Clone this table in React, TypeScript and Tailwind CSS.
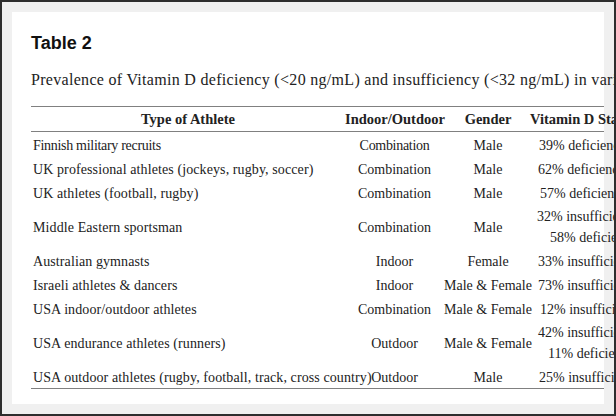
import React from 'react';

interface Row {
  athlete: string;
  setting: string;
  gender: string;
  status: { text: string; indent: string }[];
  tall?: boolean;
  tight?: boolean;
}

const rows: Row[] = [
  { athlete: 'Finnish military recruits', setting: 'Combination', gender: 'Male', tight: true, status: [{ text: '39% deficiency', indent: 'pl-[7px]' }] },
  { athlete: 'UK professional athletes (jockeys, rugby, soccer)', setting: 'Combination', gender: 'Male', status: [{ text: '62% deficiency', indent: 'pl-[6px]' }] },
  { athlete: 'UK athletes (football, rugby)', setting: 'Combination', gender: 'Male', status: [{ text: '57% deficiency', indent: 'pl-[8px]' }] },
  {
    athlete: 'Middle Eastern sportsman',
    setting: 'Combination',
    gender: 'Male',
    tall: true,
    status: [
      { text: '32% insufficiency', indent: 'pl-[5px]' },
      { text: '58% deficiency', indent: 'pl-[18px]' },
    ],
  },
  { athlete: 'Australian gymnasts', setting: 'Indoor', gender: 'Female', status: [{ text: '33% insufficiency', indent: 'pl-[6px]' }] },
  { athlete: 'Israeli athletes & dancers', setting: 'Indoor', gender: 'Male & Female', status: [{ text: '73% insufficiency', indent: 'pl-[6px]' }] },
  { athlete: 'USA indoor/outdoor athletes', setting: 'Combination', gender: 'Male & Female', status: [{ text: '12% insufficiency', indent: 'pl-[8px]' }] },
  {
    athlete: 'USA endurance athletes (runners)',
    setting: 'Outdoor',
    gender: 'Male & Female',
    tall: true,
    status: [
      { text: '42% insufficiency', indent: 'pl-[6px]' },
      { text: '11% deficiency', indent: 'pl-[16px]' },
    ],
  },
  { athlete: 'USA outdoor athletes (rugby, football, track, cross country)', setting: 'Outdoor', gender: 'Male', status: [{ text: '25% insufficiency', indent: 'pl-[7px]' }] },
];

const serif = "font-['Liberation_Serif',serif]";

export default function App() {
  return (
    <div className="w-[616px] h-[416px] border-2 border-[#2e2e2e] bg-[#f0f0f0] p-[10px] overflow-hidden">
      <div className="bg-white h-full pl-[19px] pt-[20px]">
        <h1 className="font-['Liberation_Sans',Arial,sans-serif] font-bold text-[18px] leading-[22px] text-[#111]">Table 2</h1>
        <p className={`${serif} mt-[16px] text-[16px] tracking-[0.3px] leading-[20px] text-[#222] whitespace-nowrap`}>
          Prevalence of Vitamin D deficiency (&lt;20 ng/mL) and insufficiency (&lt;32 ng/mL) in various athletic populations
        </p>

        <div className={`${serif} mt-[16px] border-t border-b border-[#808080] text-[#222]`}>
          <div className="grid grid-cols-[314px_99px_88px_73px] h-[25px] pt-[2px] items-center border-b border-[#808080] font-bold text-[14.5px] whitespace-nowrap">
            <div className="text-center">Type of Athlete</div>
            <div className="text-center">Indoor/Outdoor</div>
            <div className="text-center">Gender</div>
            <div className="-ml-[2px]">Vitamin D Status</div>
          </div>
          {rows.map((r) => (
            <div
              key={r.athlete}
              className={`grid grid-cols-[314px_99px_88px_73px] items-center text-[14px] leading-[21px] whitespace-nowrap pt-[2px] ${r.tall ? 'h-[44px]' : 'h-[24px]'}`}
            >
              <div className={`pl-[2px] ${r.tight ? 'tracking-[-0.3px]' : 'tracking-[0.1px]'}`}>{r.athlete}</div>
              <div className={`text-center ${r.tight ? 'tracking-[-0.3px]' : ''}`}>{r.setting}</div>
              <div className="text-center">{r.gender}</div>
              <div>
                {r.status.map((s) => (
                  <div key={s.text} className={s.indent}>
                    {s.text}
                  </div>
                ))}
              </div>
            </div>
          ))}
        </div>
      </div>
    </div>
  );
}
